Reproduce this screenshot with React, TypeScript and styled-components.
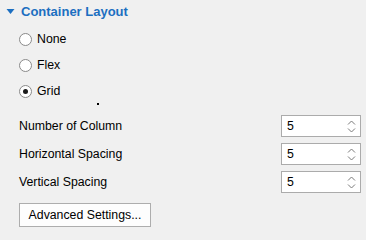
import React from "react";
import styled, { createGlobalStyle } from "styled-components";

const Global = createGlobalStyle`
  html, body { margin: 0; padding: 0; background: #f0f0f0; }
  body { font-family: "Liberation Sans", Arial, sans-serif; font-size: 12.3px; color: #000; }
`;

const Panel = styled.div`
  position: relative;
  width: 366px;
  height: 234px;
  box-sizing: border-box;
  padding: 0 5px 0 0;
  display: flex;
  flex-direction: column;
  background: #f0f0f0;
  overflow: hidden;
`;

const Header = styled.div`
  height: 22px;
  display: flex;
  align-items: center;
  padding-left: 6px;
  gap: 6px;
  color: #1c6fc1;
  font-weight: bold;
  font-size: 13px;
`;

const RadioGroup = styled.div`
  display: flex;
  flex-direction: column;
  padding: 4px 0 0 19px;
`;

const RadioRow = styled.label`
  height: 26px;
  display: flex;
  align-items: center;
  gap: 5px;
`;

const RadioCircle = styled.span<{ $checked?: boolean }>`
  width: 13px;
  height: 13px;
  box-sizing: border-box;
  border-radius: 50%;
  border: 1px solid #8a8a8a;
  background: #fff;
  display: flex;
  align-items: center;
  justify-content: center;
  &::after {
    content: "";
    width: 5px;
    height: 5px;
    border-radius: 50%;
    background: ${(p) => (p.$checked ? "#1a1a1a" : "transparent")};
  }
`;

const Form = styled.div`
  display: flex;
  flex-direction: column;
  padding: 8px 0 0 19px;
`;

const FieldRow = styled.div`
  height: 28px;
  display: flex;
  align-items: center;
  justify-content: space-between;
`;

const SpinBox = styled.div`
  width: 80px;
  height: 22px;
  box-sizing: border-box;
  border: 1px solid #ababab;
  background: #fff;
  display: flex;
  align-items: center;
  justify-content: space-between;
  padding: 0 4px 0 5px;
`;

const Arrows = styled.div`
  display: flex;
  flex-direction: column;
  gap: 3px;
  align-items: center;
`;

const Button = styled.button`
  margin: 7px 0 0 19px;
  width: 132px;
  height: 24px;
  border: 1px solid #adadad;
  background: #fdfdfd;
  font-family: inherit;
  font-size: 12.3px;
  color: #000;
  padding: 0;
`;

const Cursor = styled.span`
  position: absolute;
  left: 97px;
  top: 103px;
  width: 2px;
  height: 2px;
  background: #000;
`;

const Spin = ({ value }: { value: string }) => (
  <SpinBox>
    <span>{value}</span>
    <Arrows>
      <svg width="9" height="5" viewBox="0 0 9 5">
        <path d="M1 4.5 L4.5 1 L8 4.5" fill="none" stroke="#7a7a7a" strokeWidth="1" />
      </svg>
      <svg width="9" height="5" viewBox="0 0 9 5">
        <path d="M1 0.5 L4.5 4 L8 0.5" fill="none" stroke="#7a7a7a" strokeWidth="1" />
      </svg>
    </Arrows>
  </SpinBox>
);

export default function App() {
  return (
    <Panel>
      <Global />
      <Header>
        <svg width="9" height="5" viewBox="0 0 9 5">
          <path d="M0.5 0 L8.5 0 L4.5 5 Z" fill="#1c6fc1" />
        </svg>
        <span>Container Layout</span>
      </Header>
      <RadioGroup>
        <RadioRow><RadioCircle />None</RadioRow>
        <RadioRow><RadioCircle />Flex</RadioRow>
        <RadioRow><RadioCircle $checked />Grid</RadioRow>
      </RadioGroup>
      <Cursor />
      <Form>
        <FieldRow><span>Number of Column</span><Spin value="5" /></FieldRow>
        <FieldRow><span>Horizontal Spacing</span><Spin value="5" /></FieldRow>
        <FieldRow><span>Vertical Spacing</span><Spin value="5" /></FieldRow>
      </Form>
      <Button>Advanced Settings...</Button>
    </Panel>
  );
}
